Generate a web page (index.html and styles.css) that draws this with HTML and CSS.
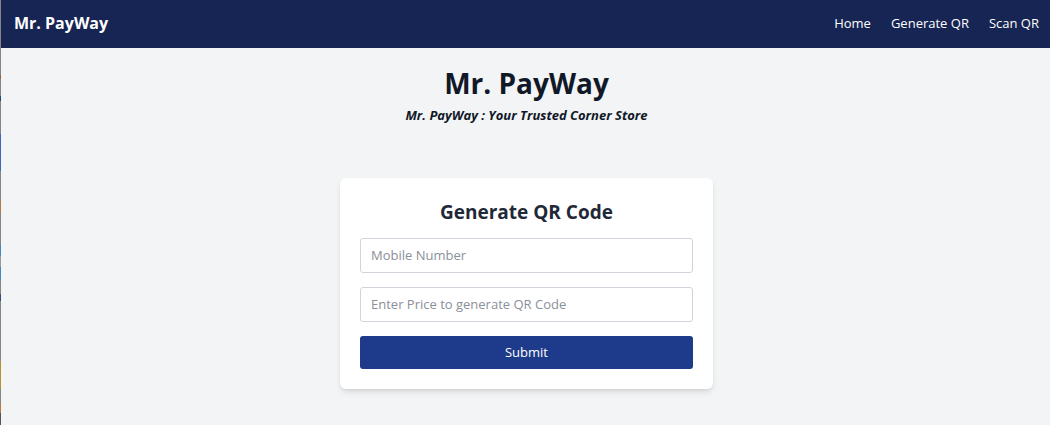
FILE: index.html
```html
<!DOCTYPE html>
<html lang="en">
<head>
<meta charset="utf-8">
<meta name="viewport" content="width=device-width, initial-scale=1">
<title>Mr. PayWay</title>
<link rel="stylesheet" href="styles.css">
</head>
<body>
<div class="page">
  <header class="navbar">
    <a class="brand" href="#">Mr. PayWay</a>
    <nav class="links">
      <a href="#">Home</a>
      <a href="#generate">Generate QR</a>
      <a href="#scan">Scan QR</a>
    </nav>
  </header>
  <main class="content">
    <h1 class="title">Mr. PayWay</h1>
    <p class="tagline">Mr. PayWay : Your Trusted Corner Store</p>
    <form class="card" id="generate">
      <h2 class="card-title">Generate QR Code</h2>
      <input class="field" type="tel" aria-label="Mobile Number" placeholder="Mobile Number">
      <input class="field" type="text" aria-label="Enter Price to generate QR Code" placeholder="Enter Price to generate QR Code">
      <button class="submit" type="submit">Submit</button>
    </form>
  </main>
</div>
</body>
</html>
```

FILE: styles.css
```css
* {
  box-sizing: border-box;
}

body {
  margin: 0;
  padding-left: 1px;
  font-family: "Open Sans", "Noto Sans", sans-serif;
  font-size: 13px;
  line-height: 20px;
  color: #111827;
  background: linear-gradient(#858585 0 75px, #9a6238 75px 79px, #858585 79px 96px, #24487c 96px 101px, #858585 101px 134px, #3e66bc 134px 171px, #858585 171px 200px, #b37b45 200px 213px, #858585 213px 245px, #4386bd 245px 256px, #999 256px 267px, #4386bd 267px 280px, #858585 280px 294px, #374d73 294px 301px, #858585 301px 361px, #b6912f 361px 389px, #858585 389px 403px, #b37b45 403px 413px, #555 413px);
}

.page {
  min-height: 100vh;
  background: #f3f4f6;
}

.navbar {
  display: flex;
  align-items: center;
  justify-content: space-between;
  padding: 11px 11px 13px 13px;
  background: #172554;
}

.navbar a {
  color: #fff;
  text-decoration: none;
}

.navbar .brand {
  font-size: 16px;
  line-height: 24px;
  font-weight: 700;
}

.links {
  display: flex;
  gap: 20px;
}

.content {
  display: flex;
  flex-direction: column;
  align-items: center;
  padding: 20px 12px 20px 14px;
}

.title {
  margin: 0;
  font-size: 28px;
  line-height: 30px;
  font-weight: 700;
}

.tagline {
  margin: 7px 0 0;
  font-size: 13px;
  font-style: italic;
  font-weight: 700;
}

.card {
  display: flex;
  flex-direction: column;
  width: 100%;
  max-width: 373px;
  margin-top: 53px;
  padding: 20px;
  border-radius: 6px;
  background: #fff;
  box-shadow: 0 4px 6px -1px rgba(0, 0, 0, 0.1), 0 2px 4px -2px rgba(0, 0, 0, 0.1);
}

.card-title {
  margin: 0 0 12px;
  font-size: 19px;
  line-height: 28px;
  font-weight: 700;
  color: #1f2937;
  text-align: center;
}

.field {
  width: 100%;
  margin: 0 0 14px;
  padding: 7px 10px;
  border: 1px solid #d1d5db;
  border-radius: 3px;
  font: inherit;
  line-height: 19px;
  color: #111827;
  background: #fff;
}

.field::placeholder {
  color: #8b9099;
}

.submit {
  padding: 7px 14px;
  border: 0;
  border-radius: 3px;
  font: inherit;
  line-height: 19px;
  color: #fff;
  background: #1e3a8a;
  cursor: pointer;
}
```
